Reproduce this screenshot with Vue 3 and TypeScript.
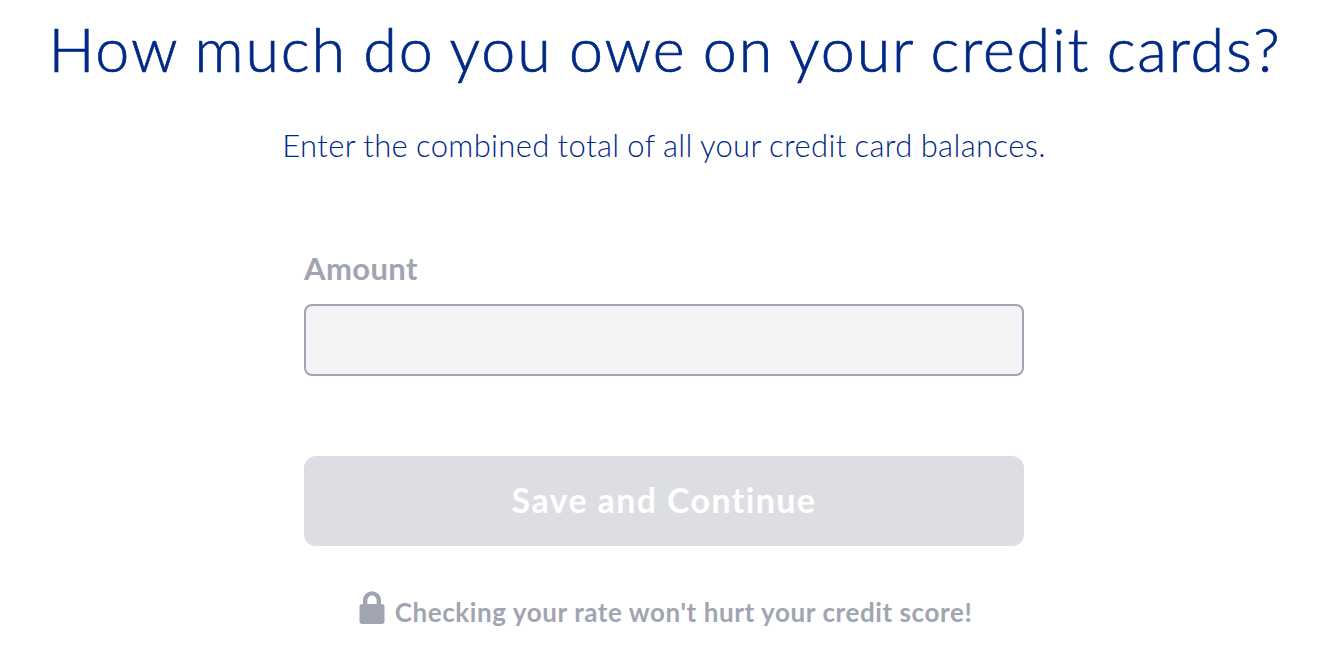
<template>
  <main class="page">
    <h1 class="title">How much do you owe on your credit cards?</h1>
    <p class="subtitle">Enter the combined total of all your credit card balances.</p>
    <form class="debt-form" @submit.prevent="save">
      <label class="label" for="amount">Amount</label>
      <input id="amount" v-model="amount" class="amount-input" type="text" inputmode="decimal" />
      <button class="save-button" type="submit" :class="{ active: isValid }" :disabled="!isValid">
        <span class="save-text">Save and Continue</span>
      </button>
    </form>
    <p class="note">
      <svg class="lock" viewBox="0 0 26 34" aria-hidden="true">
        <path d="M6.2 15V9.2a6.8 6.8 0 0 1 13.6 0V15" fill="none" stroke="currentColor" stroke-width="4.4" />
        <rect x="0.5" y="13" width="25" height="20" rx="3" fill="currentColor" />
      </svg>
      <span class="note-text">Checking your rate won't hurt your credit score!</span>
    </p>
  </main>
</template>

<script setup lang="ts">
import { computed, ref } from 'vue';

const amount = ref('');
const savedAmount = ref<number | null>(null);

const parsedAmount = computed(() => Number(amount.value.replace(/[$,\s]/g, '')));
const isValid = computed(() => amount.value.trim() !== '' && parsedAmount.value >= 0);

const save = () => {
  if (isValid.value) {
    savedAmount.value = parsedAmount.value;
  }
};
</script>

<style>
body {
  background: #fff;
}
</style>

<style scoped>
.page {
  display: flex;
  flex-direction: column;
  align-items: center;
  box-sizing: border-box;
  height: 658px;
  padding: 13px 14px 0 0;
  overflow: hidden;
  font-family: Lato, "Open Sans", sans-serif;
  color: #002985;
}

.title {
  margin: 0;
  padding-left: 2px;
  font-size: 61px;
  font-weight: 300;
  line-height: 72px;
  letter-spacing: 1.86px;
  word-spacing: -2px;
  white-space: nowrap;
  -webkit-text-stroke: 0.7px #002985;
}

.subtitle {
  margin: 40px 0 0;
  font-size: 31px;
  font-weight: 300;
  line-height: 41px;
  letter-spacing: 0.36px;
  word-spacing: -0.9px;
  white-space: nowrap;
}

.debt-form {
  display: flex;
  flex-direction: column;
  width: 720px;
  margin-top: 84px;
}

.label {
  font-size: 31px;
  font-weight: 700;
  line-height: 36px;
  letter-spacing: 0.4px;
  color: #a1a5b1;
}

.amount-input {
  box-sizing: border-box;
  height: 72px;
  margin: 18px 0 0;
  padding: 0 20px;
  border: 2px solid #a1a5b3;
  border-radius: 8px;
  outline: none;
  background: #f4f4f6;
  font-family: inherit;
  font-size: 30px;
  color: #002985;
}

.save-button {
  height: 90px;
  margin: 80px 0 0;
  padding: 0 0 4px;
  border: none;
  border-radius: 12px;
  background: #dddee3;
  font-family: inherit;
  font-size: 34px;
  font-weight: 700;
  letter-spacing: 1.37px;
  color: #fff;
}

.save-button.active {
  background: #002985;
  cursor: pointer;
}

.note {
  display: flex;
  align-items: flex-start;
  gap: 10px;
  margin: 45px 0 0;
  padding-left: 3px;
  color: #a1a5b1;
}

.lock {
  width: 26px;
  height: 34px;
}

.note-text {
  margin-top: 5px;
  font-size: 26px;
  font-weight: 700;
  line-height: 32px;
  letter-spacing: 0.59px;
  white-space: nowrap;
}
</style>
